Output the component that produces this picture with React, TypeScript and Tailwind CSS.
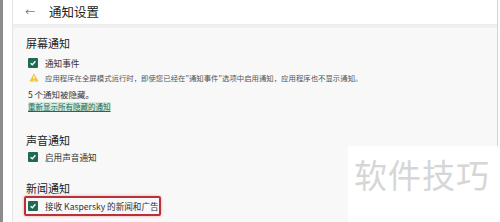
import React from 'react';

const font = { fontFamily: '"Noto Sans CJK SC", "Noto Sans", sans-serif' };

function Check() {
  return (
    <span className="flex h-[10px] w-[10px] shrink-0 items-center justify-center rounded-[1px] bg-[#1f6b52]">
      <svg viewBox="0 0 10 10" className="h-[8px] w-[8px]">
        <path d="M2 5.2 L4.2 7.2 L8 2.8" fill="none" stroke="#fff" strokeWidth="1.6" />
      </svg>
    </span>
  );
}

function Row({ label }: { label: string }) {
  return (
    <div className="flex h-[10px] items-center gap-[7px] whitespace-nowrap text-[8.6px] leading-[10px] text-[#333]">
      <Check />
      <span>{label}</span>
    </div>
  );
}

export default function App() {
  return (
    <div className="relative flex h-[222px] w-[500px] overflow-hidden bg-white" style={font}>
      <div className="w-[3px] shrink-0 bg-[#8c8c8c]" />
      <div className="w-[10px] shrink-0 border-r border-[#e4e4e4] bg-white" />
      <div className="flex min-h-0 flex-1 flex-col">
        <div className="flex h-[25px] shrink-0 items-center border-b border-[#ececec] bg-white pl-[12px]">
          <span className="text-[10px] leading-[12px] text-[#777]">←</span>
          <span className="ml-[14px] text-[12.5px] leading-[16px] text-[#222]">通知设置</span>
        </div>
        <div className="flex flex-1 flex-col border-t-[3px] border-[#f0f0f0] bg-[#f8f8f8] pl-[13px]">
          <div className="mt-[8px] text-[11px] leading-[14px] text-[#222]">屏幕通知</div>
          <div className="mt-[8px] pl-[2px]">
            <Row label="通知事件" />
          </div>
          <div className="mt-[5px] flex h-[9px] items-center gap-[6px] whitespace-nowrap pl-[3px] text-[7.4px] leading-[9px] text-[#555]">
            <svg viewBox="0 0 10 9" className="h-[9px] w-[10px] shrink-0">
              <path d="M5 0.5 L9.6 8.5 L0.4 8.5 Z" fill="#f2c230" />
              <rect x="4.5" y="3" width="1" height="3" fill="#fff" />
              <rect x="4.5" y="6.8" width="1" height="1" fill="#fff" />
            </svg>
            <span>应用程序在全屏模式运行时，即使您已经在"通知事件"选项中启用通知，应用程序也不显示通知。</span>
          </div>
          <div className="mt-[7px] pl-[2px] text-[8.5px] leading-[11px] text-[#333]">5 个通知被隐藏。</div>
          <div className="mt-[2px] flex h-[10px] pl-[2px]">
            <span className="bg-[#d3e8df] text-[7.5px] leading-[10px] text-[#1f6b52] underline">重新显示所有隐藏的通知</span>
          </div>
          <div className="mt-[21px] text-[11px] leading-[14px] text-[#222]">声音通知</div>
          <div className="mt-[5px] pl-[2px]">
            <Row label="启用声音通知" />
          </div>
          <div className="mt-[19px] text-[11px] leading-[14px] text-[#222]">新闻通知</div>
          <div className="-ml-[2px] mt-[1px] w-[137px] rounded-[2px] border-2 border-[#b8323a] px-[2px] py-[3px] shadow-[0_0_3px_#e8a0a6]">
            <Row label="接收 Kaspersky 的新闻和广告" />
          </div>
        </div>
      </div>
      <div className="w-[3px] shrink-0 border-l border-[#d4d4d4] bg-white" />
      <div className="absolute left-[348px] top-[146px] flex h-[76px] w-[152px] items-start bg-white pl-[6px] pt-[8px]">
        <span className="text-[33px] leading-[40px] tracking-[1px] text-[#d6d6d6]">软件技巧</span>
      </div>
    </div>
  );
}
